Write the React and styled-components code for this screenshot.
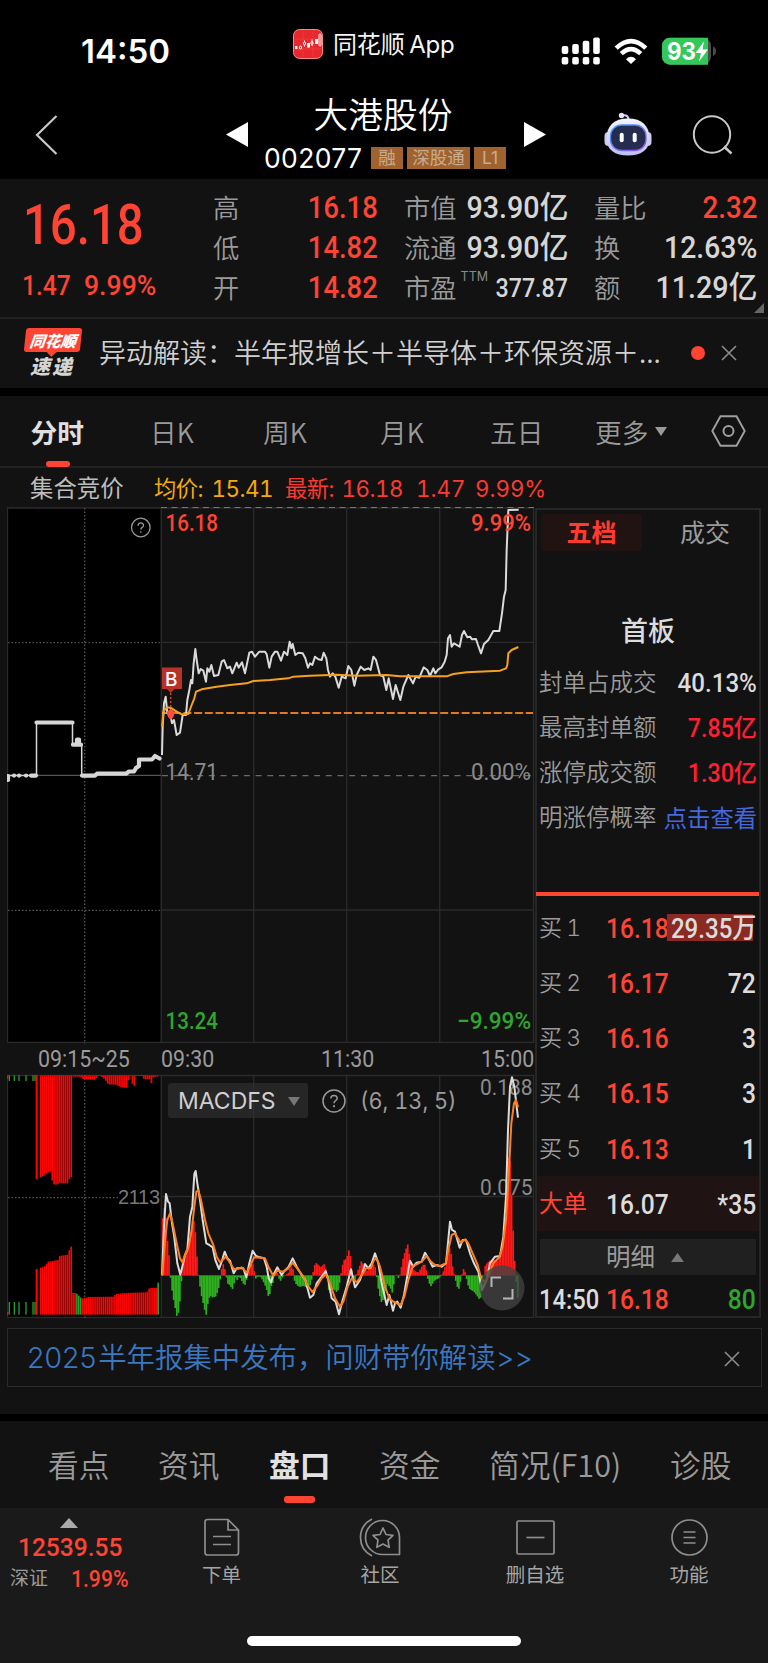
import React from "react";
import styled, { createGlobalStyle } from "styled-components";

const RED = "#ff4433";
const CJK = '"Noto Sans CJK SC", sans-serif';

const GlobalStyle = createGlobalStyle`
  * { box-sizing: border-box; }
  body { margin: 0; background: #121212; }
  svg { display: block; flex: none; }
`;

const Screen = styled.div`
  width: 768px;
  height: 1663px;
  overflow: hidden;
  display: flex;
  flex-direction: column;
  background: #121212;
  color: #d4d4d4;
  font-family: Inter, ${CJK};
  font-weight: 400;
  white-space: nowrap;
`;

/* Text run with its own size, colour, tracking and horizontal condensing. */
const Label = styled.span`
  display: inline-block;
  flex: none;
  font-family: ${(p) => (p.$din ? `Roboto, ${CJK}` : `Inter, ${CJK}`)};
  font-variant-numeric: ${(p) => (p.$proportional ? "normal" : "tabular-nums")};
  font-size: ${(p) => p.$size}px;
  font-weight: ${(p) => p.$weight || 400};
  color: ${(p) => p.$color || "#9b9b9b"};
  letter-spacing: ${(p) => p.$track || 0}px;
  word-spacing: ${(p) => p.$gap || 0}px;
  line-height: 1.2;
  transform: scaleX(${(p) => p.$narrow || 1});
  transform-origin: ${(p) => p.$origin || "left"} center;
`;

/* ---------- status bar and title ---------- */
const StatusBar = styled.header`
  height: 90px;
  flex: none;
  background: #000;
  display: grid;
  grid-template-columns: 293px 268px 207px;
`;
const Clock = styled.div`
  padding: 31px 0 0 81px;
  font-size: 33px;
  line-height: 40px;
  font-weight: 600;
  color: #fff;
`;
const AppName = styled.div`
  display: flex;
  align-items: center;
  gap: 10px;
  height: 88px;
  color: #f5f5f5;
`;
const AppTitle = styled.span`
  font-size: 24px;
  line-height: 32px;
  letter-spacing: -0.15px;
  word-spacing: -2px;
  padding-top: 2px;
`;
const Indicators = styled.div`
  display: flex;
  align-items: flex-start;
  padding-top: 36px;
`;

const TitleBar = styled.div`
  height: 89px;
  flex: none;
  background: #000;
  display: grid;
  grid-template-columns: 226px 22px 276px 22px 58px 48px 116px;
`;
const Spot = styled.div`
  padding: ${(p) => p.$top}px 0 0 ${(p) => p.$left || 0}px;
`;
const StockName = styled.div`
  display: flex;
  flex-direction: column;
  align-items: center;
  color: #fff;
`;
const StockTitle = styled.h1`
  margin: 0 0 0 -6px;
  font-family: ${CJK};
  font-size: 34.7px;
  line-height: 46px;
  font-weight: 350;
`;
const CodeRow = styled.div`
  display: flex;
  align-items: center;
  align-self: flex-start;
  margin: 9px 0 0 16px;
  height: 26px;
`;
const Code = styled.span`
  width: 107px;
  font-size: 26.5px;
  letter-spacing: 0.35px;
`;
const Tag = styled.span`
  width: ${(p) => p.$w}px;
  height: 22px;
  margin-right: 4px;
  background: #a0632f;
  color: #c7ac90;
  font-size: 17.5px;
  line-height: 21px;
  text-align: center;
`;

/* ---------- quote ---------- */
const Quote = styled.section`
  position: relative;
  height: 140px;
  flex: none;
  border-bottom: 2px solid #222;
  display: grid;
  grid-template-columns: 213px 191px 190px 163px;
`;
const PriceBlock = styled.div`
  padding: 12px 0 0 23px;
`;
const LastPrice = styled.div`
  height: 68px;
  display: flex;
  align-items: center;
`;
const ChangeRow = styled.div`
  display: grid;
  grid-template-columns: 62px 90px;
  margin: 10px 0 0 -1px;
`;
const Stats = styled.div`
  display: flex;
  flex-direction: column;
  padding: 9.5px ${(p) => p.$right}px 0 0;
`;
const Stat = styled.div`
  height: 40px;
  display: flex;
  align-items: center;
  justify-content: space-between;
`;
const Superscript = styled.sup`
  font-size: 12.5px;
  line-height: 1;
  margin: 0 auto 22px 4px;
  color: #8a8a8a;
`;
const Corner = styled.svg`
  position: absolute;
  right: 4px;
  bottom: 4px;
`;

/* ---------- news ---------- */
const News = styled.section`
  height: 69px;
  flex: none;
  display: flex;
  align-items: center;
  padding: 0 0 2px 24px;
`;
const Badge = styled.div`
  width: 75px;
  height: 50px;
  display: flex;
  flex-direction: column;
  font-family: ${CJK};
  font-style: italic;
  font-weight: 900;
`;
const BadgeTop = styled.div`
  position: relative;
  width: 56px;
  height: 25px;
  margin-left: 1px;
  line-height: 24px;
  text-align: center;
  font-size: 15.5px;
  color: #fff;
  background: ${RED};
  border-radius: 3px;
  transform: skewX(-6deg);
  &::after {
    content: "";
    position: absolute;
    left: 23px;
    top: 24px;
    border: 5px solid transparent;
    border-top-color: ${RED};
    border-bottom: 0;
  }
`;
const BadgeBottom = styled.div`
  font-size: 20px;
  line-height: 24px;
  padding: 2px 0 0 6px;
  color: #d5d5d5;
  letter-spacing: 2px;
`;
const Headline = styled.div`
  width: 592px;
  margin-top: -2px;
  font-family: ${CJK};
  font-size: 27px;
  font-weight: 350;
  color: #d0d0d0;
`;
const Dot = styled.i`
  width: 14px;
  height: 14px;
  border-radius: 50%;
  background: ${RED};
  margin-right: 16px;
`;
const Divider = styled.div`
  height: ${(p) => p.$h}px;
  flex: none;
  background: #000;
`;

/* ---------- period tabs ---------- */
const Tabs = styled.nav`
  height: 72px;
  flex: none;
  border-bottom: 2px solid #222;
  display: grid;
  grid-template-columns: 150px 113px 117px 110px 105px 116px 57px;
  font-family: ${CJK};
  font-size: 26.7px;
  line-height: 71px;
  color: #9a9a9a;
`;
const Tab = styled.div`
  position: relative;
  padding-left: ${(p) => p.$left || 0}px;
  color: ${(p) => (p.$active ? "#e0e0e0" : "inherit")};
  font-weight: ${(p) => (p.$active ? 700 : 350)};
  &::after {
    content: "";
    display: ${(p) => (p.$active ? "block" : "none")};
    position: absolute;
    left: 45.5px;
    bottom: 0;
    width: 24px;
    height: 6px;
    border-radius: 3px;
    background: ${RED};
  }
`;
const MoreTab = styled(Tab)`
  display: flex;
  align-items: center;
  gap: 7px;
`;
const Legend = styled.div`
  height: 39px;
  flex: none;
  display: grid;
  grid-template-columns: 124px 131px 131px 59px 90px;
  padding: 3px 0 0 30px;
  align-items: center;
`;

/* ---------- chart area ---------- */
const Board = styled.main`
  height: 812px;
  flex: none;
  display: flex;
  padding-left: 7px;
`;
const Charts = styled.div`
  width: 528px;
  display: flex;
  flex-direction: column;
`;
const TimeAxis = styled.div`
  height: 30px;
  flex: none;
  display: grid;
  grid-template-columns: 31px 123px 160px 160px 54px;
  align-items: center;
`;
const Indicator = styled.div`
  position: relative;
  height: 245px;
`;
const IndicatorBar = styled.div`
  position: absolute;
  left: 161px;
  top: 9px;
  display: flex;
  align-items: center;
  height: 35px;
`;
const IndicatorButton = styled.div`
  width: 140px;
  height: 35px;
  border-radius: 3px;
  background: rgba(48, 48, 48, 0.66);
  padding: 2px 0 0 10px;
  display: flex;
  align-items: center;
  gap: 12px;
  margin-right: 14px;
`;
const FullscreenButton = styled.div`
  position: absolute;
  left: 472px;
  top: 191px;
`;

/* ---------- order book ---------- */
const Book = styled.aside`
  width: 226px;
  height: 810px;
  margin-top: 1px;
  border: 2px solid #262626;
`;
const BookTabs = styled.div`
  display: grid;
  grid-template-columns: 101px 1fr;
  padding: 4px 0 0 4px;
  height: 41px;
`;
const BookTab = styled.div`
  font-family: ${CJK};
  font-size: 25px;
  line-height: 35px;
  text-align: center;
  border-radius: 4px;
  padding-left: ${(p) => (p.$active ? 0 : 9)}px;
  color: ${(p) => (p.$active ? "#ff3b30" : "#9b9b9b")};
  background: ${(p) => (p.$active ? "#221313" : "transparent")};
  font-weight: ${(p) => (p.$active ? 600 : 400)};
`;
const BoardTitle = styled.h2`
  margin: 59px 0 11px;
  font-family: ${CJK};
  font-size: 27px;
  line-height: 40px;
  font-weight: 500;
  text-align: center;
  color: #dcdcdc;
`;
const SealRow = styled.div`
  height: 45px;
  display: flex;
  align-items: center;
  justify-content: space-between;
  padding: 0 2px 0 2px;
`;
const RedRule = styled.div`
  height: 4px;
  background: #ff4633;
  margin: 51px 0 4px -1px;
`;
const OrderRow = styled.div`
  height: ${(p) => p.$h || 55.2}px;
  display: grid;
  grid-template-columns: 67px 67px minmax(0, 1fr);
  align-items: center;
  padding: 2px 3px 0 2px;
  background: ${(p) => (p.$big ? "#1f1313" : "transparent")};
`;
const Volume = styled.div`
  display: flex;
  justify-content: flex-end;
  position: relative;
`;
const VolumeFill = styled.div`
  position: absolute;
  right: 3px;
  top: 2px;
  width: 86px;
  height: 27px;
  background: #8a2a23;
`;
const DetailButton = styled.div`
  margin: 8px 3px 0 3px;
  height: 36px;
  background: #202020;
  display: flex;
  align-items: center;
  padding: 1px 0 0 66px;
  gap: 16px;
`;

/* ---------- banner and bottom ---------- */
const Banner = styled.section`
  margin: 9px 6px 27px 7px;
  height: 59px;
  flex: none;
  border: 1.5px solid #2b2b2b;
  display: flex;
  align-items: center;
  justify-content: space-between;
  padding: 2px 21px 0 19px;
`;
const SectionTabs = styled.nav`
  height: 87px;
  flex: none;
  display: grid;
  grid-template-columns: 158px 111px 110px 110px 181px 98px;
  font-family: ${CJK};
  font-size: 30.7px;
  line-height: 86px;
`;
const SectionTab = styled.div`
  position: relative;
  padding-left: ${(p) => p.$left || 0}px;
  color: ${(p) => (p.$active ? "#e2e2e2" : "#9a9a9a")};
  font-weight: ${(p) => (p.$active ? 700 : 350)};
  &::after {
    content: "";
    display: ${(p) => (p.$active ? "block" : "none")};
    position: absolute;
    left: 15px;
    bottom: 5.5px;
    width: 31px;
    height: 6.5px;
    border-radius: 3px;
    background: ${RED};
  }
`;
const ActionBar = styled.footer`
  flex: 1;
  background: #1a1a1a;
  display: grid;
  grid-template-columns: 147px 149px 168px 142px 166px;
  grid-template-rows: 128px 1fr;
`;
const IndexCell = styled.div`
  padding: 10px 0 0 10px;
`;
const IndexValue = styled.div`
  padding-left: 8px;
  height: 35px;
  display: flex;
  align-items: flex-end;
`;
const IndexRow = styled.div`
  display: grid;
  grid-template-columns: 61px 60px;
  align-items: center;
  margin-top: 2px;
`;
const Action = styled.div`
  display: flex;
  flex-direction: column;
  align-items: center;
  padding-top: 10px;
  gap: 7px;
`;
const HomeIndicator = styled.div`
  width: 274px;
  height: 10px;
  margin-left: 247px;
  grid-column: 1 / -1;
  border-radius: 5px;
  background: #fff;
`;

/* ---------- icons ---------- */
const AppIcon = () => (
  <svg width="30" height="30" viewBox="0 0 30 30">
    <rect x="0.5" y="0.5" width="29" height="29" rx="6" fill="#e8282c" stroke="#f58a86" />
    <path d="M2 10H28M2 20H28M10 2V28M20 2V28" stroke="#ef4a4b" strokeWidth=".5" />
    <rect x="2" y="17" width="2.4" height="3" fill="#fff" />
    <g fill="none" stroke="#fff">
      <rect x="6.5" y="17" width="2" height="3" rx="1" />
      <path d="M11.5 11.5V13M11.5 16V17.5" />
      <rect x="10.5" y="13" width="2" height="3" rx="1" />
      <path d="M19 10.500V17" />
      <rect x="18" y="12.500" width="2" height="3" rx="1" />
      <rect x="26" y="5" width="2" height="12" rx="1" />
    </g>
    <rect x="14" y="14" width="3" height="4.500" fill="#fff" />
    <rect x="22" y="10" width="3" height="5" fill="#fff" />
  </svg>
);
const SystemIcons = () => (
  <svg width="170" height="32" viewBox="561 36 170 32">
    <g fill="#fff">
      {[46, 44, 40.7, 37.5].map((y, i) => (
        <g key={y}>
          <rect x={561.7 + i * 10.5} y={y} width="6.6" height={54 - y} rx="2" />
          <rect x={561.7 + i * 10.5} y="57" width="6.600" height="7.600" rx="2" />
        </g>
      ))}
      <path d="M626 59.200Q631 54.500 636 59.200L631 64Z" />
    </g>
    <g fill="none" stroke="#fff" strokeWidth="4.600">
      <path d="M616.200 48.200Q631 34 645.800 48.200" />
      <path d="M621.300 53.600Q631 44.500 640.700 53.600" />
    </g>
    <rect x="662" y="37.700" width="49" height="27" rx="8" fill="#4a4a4d" />
    <path d="M670 37.700H708V64.700H670A8 8 0 0 1 662 56.700V45.700A8 8 0 0 1 670 37.700Z" fill="#34c759" />
    <path d="M713 46.500Q716 47.500 716 51.200T713 56Z" fill="#4a4a4d" />
    <text x="667" y="59.500" fill="#fff" fontFamily="Inter" fontWeight="700" fontSize="24" textLength="29" lengthAdjust="spacingAndGlyphs">93</text>
    <path d="M704 41.500L695.500 53H701L699 61.500L708 49.500H702.500Z" fill="#fff" />
  </svg>
);
const Chevron = () => (
  <svg width="24" height="42" viewBox="0 0 24 42">
    <path d="M21.500 1L2 20L21.500 39" fill="none" stroke="#c8c8c8" strokeWidth="2.200" />
  </svg>
);
const Triangle = ({ points, w, h, color }) => (
  <svg width={w} height={h}>
    <polygon points={points} fill={color} />
  </svg>
);
const Robot = () => (
  <svg width="48" height="45" viewBox="604 112 48 45">
    <defs>
      <linearGradient id="shell" x1="0" y1="0" x2="0" y2="1">
        <stop offset="0" stopColor="#f4f3fd" />
        <stop offset="1" stopColor="#bcc0ec" />
      </linearGradient>
      <linearGradient id="rim" x1="0" y1="0" x2="1" y2="1">
        <stop offset="0" stopColor="#3aa5ff" />
        <stop offset="1" stopColor="#9a4bf0" />
      </linearGradient>
    </defs>
    <path d="M622 115.500Q629 114 628.500 121" fill="none" stroke="#cfd1f1" strokeWidth="2" />
    <circle cx="621.500" cy="115.500" r="2.700" fill="#e3e3f8" />
    <rect x="604.500" y="132" width="8" height="14" rx="4" fill="#c9cbf0" />
    <rect x="643.500" y="132" width="8" height="14" rx="4" fill="#c9cbf0" />
    <path d="M628 118.500C642 118.500 649.500 126 649.500 138.500C649.500 150 641 155.500 628 155.500S606.500 150 606.500 138.500C606.500 126 614 118.500 628 118.500Z" fill="url(#shell)" />
    <rect x="610.500" y="125" width="35.500" height="25.500" rx="11" fill="#252c50" stroke="url(#rim)" strokeWidth="1.300" />
    <rect x="619.700" y="132.700" width="4" height="9.500" rx="2" fill="#fff" />
    <rect x="632.700" y="132.700" width="4" height="9.500" rx="2" fill="#fff" />
  </svg>
);
const SearchIcon = () => (
  <svg width="42" height="42" viewBox="692 115 42 42">
    <circle cx="712" cy="134.500" r="18.200" fill="none" stroke="#c8c8c8" strokeWidth="2" />
    <path d="M724 146.500L731.500 153.500" stroke="#c8c8c8" strokeWidth="2.400" />
  </svg>
);
const CloseIcon = ({ size = 16 }) => (
  <svg width={size} height={size} viewBox="0 0 16 16">
    <path d="M1 1L15 15M15 1L1 15" stroke="#8c8c8c" strokeWidth="1.600" />
  </svg>
);
const HexIcon = () => (
  <svg width="35" height="32" viewBox="0 0 35 32">
    <path d="M9.500 1.300H25.500L33.700 16L25.500 30.700H9.500L1.300 16Z" fill="none" stroke="#a0a0a0" strokeWidth="1.900" />
    <circle cx="17.500" cy="16" r="5" fill="none" stroke="#a0a0a0" strokeWidth="2" />
  </svg>
);
const HelpIcon = ({ size = 24 }) => (
  <svg width={size} height={size} viewBox="0 0 24 24">
    <circle cx="12" cy="12" r="11" fill="none" stroke="#9a9a9a" strokeWidth="1.500" />
    <path d="M8.800 9.500C8.800 5.400 15.200 5.400 15.200 9.300C15.200 11.600 12 11.500 12 14.300" fill="none" stroke="#9a9a9a" strokeWidth="1.500" />
    <circle cx="12" cy="17.200" r="1.100" fill="#9a9a9a" />
  </svg>
);
const stroke = { fill: "none", stroke: "#8e8e8e", strokeWidth: 1.7, strokeLinejoin: "round" };
const OrderIcon = () => (
  <svg width="36" height="39" viewBox="0 0 36 39" {...stroke}>
    <path d="M1 4Q1 1.500 3.500 1.500H24L34.500 12V34.500Q34.500 37 32 37H3.500Q1 37 1 34.500ZM24 1.500V12H34.500M9 18.500H27M9 26.500H27" />
  </svg>
);
const CommunityIcon = () => (
  <svg width="42" height="39" viewBox="0 0 42 39" {...stroke}>
    <path d="M13 1Q1.500 7 1.500 19.500T13 38" />
    <path d="M40.500 36.500H24A17 17 0 1 1 40.500 20Z" />
    <path d="M24 10L27 16.500L34 17.300L29 22.200L30.200 29.300L24 26L17.800 29.300L19 22.200L14 17.300L21 16.500Z" />
  </svg>
);
const RemoveIcon = () => (
  <svg width="39" height="39" viewBox="0 0 39 39" {...stroke}>
    <rect x="1" y="3" width="37" height="33" rx="1.500" />
    <path d="M10.500 19.500H28.500" />
  </svg>
);
const MenuIcon = () => (
  <svg width="37" height="39" viewBox="0 0 37 39" {...stroke}>
    <circle cx="18.500" cy="19.500" r="17.500" />
    <path d="M12.500 14H24.500M12.500 19.500H24.500M12.500 25H24.500" />
  </svg>
);

/* ---------- chart data ---------- */
const PRICE =
  "36,765 38,680 42,610 47,590 52,640 60,640 66,670 72,660 80,705 90,698 98,645 108,645 112,600 118,570 123,540 127,550 131,490 136,447 140,480 146,520 152,507 160,512 168,545 172,505 178,515 184,495 192,528 205,525 215,485 222,480 232,505 240,500 247,520 260,488 266,503 276,487 285,520 298,458 306,455 315,470 328,455 345,455 350,463 358,503 365,470 375,455 382,455 393,482 402,455 412,465 419,425 424,445 428,432 436,465 445,458 458,460 466,475 474,503 480,490 487,495 495,470 505,478 515,480 521,458 529,475 534,510 540,530 548,520 556,530 566,563 575,530 587,535 595,498 604,510 613,557 620,525 632,500 643,510 655,505 662,510 670,470 678,480 690,525 700,530 709,570 716,535 729,597 737,555 751,600 760,560 775,525 789,550 797,530 808,533 821,502 832,510 840,528 850,505 856,520 865,508 875,502 884,485 890,465 894,415 900,405 905,440 912,430 929,440 936,405 942,393 952,412 960,410 966,418 978,417 984,435 993,460 1002,432 1015,420 1030,393 1048,393 1056,340 1062,290 1067,270 1070,150 1075,30 1106,29";
const AVERAGE =
  "36,680 41,632 52,622 65,625 80,635 95,643 115,642 125,615 133,595 138,575 155,568 200,560 240,555 290,550 310,543 360,540 415,535 430,530 480,527 560,524 620,527 710,525 750,529 890,529 910,522 950,517 1050,512 1068,505 1072,495 1075,460 1085,450 1105,441";
const DIF =
  "36,676 42,530 48,432 54,455 59,460 66,520 72,555 82,640 91,674 97,650 105,615 112,600 120,500 127,470 133,372 137,363 142,400 150,450 158,510 169,580 178,585 188,592 196,630 207,657 215,635 224,605 232,625 240,632 251,670 260,655 272,655 280,655 289,682 298,640 308,602 318,618 330,622 342,625 350,650 356,685 363,697 370,675 382,652 395,675 404,662 415,652 428,625 440,650 455,675 466,690 480,743 490,735 500,700 515,680 527,663 535,690 545,745 557,755 567,793 578,750 590,710 603,658 615,712 630,690 640,660 645,642 655,655 665,640 675,610 685,640 695,700 710,765 718,735 729,782 735,760 742,755 752,773 762,735 775,660 780,632 790,650 800,638 815,635 825,608 835,625 848,650 860,645 875,650 888,640 893,590 900,515 906,540 915,545 929,593 938,570 948,570 960,610 972,640 985,665 996,720 1010,690 1020,640 1035,620 1050,618 1060,560 1068,440 1074,240 1080,110 1086,82 1093,110 1100,170 1104,203";
const DEA =
  "37,676 45,570 52,510 60,490 68,520 80,580 90,625 97,637 107,610 115,595 125,540 133,470 139,425 145,420 153,450 165,510 175,550 190,585 200,620 210,637 218,630 227,620 238,635 250,655 258,658 275,652 290,668 300,650 312,622 330,623 345,625 355,650 370,678 382,662 400,665 415,655 428,638 445,660 460,680 472,705 487,726 500,710 515,685 528,673 540,700 555,745 570,770 580,755 593,710 605,685 620,697 632,680 648,655 662,655 672,630 680,625 690,650 705,710 718,745 730,755 752,765 763,740 775,690 788,650 800,643 815,635 830,618 840,632 855,645 870,648 887,640 897,590 905,555 915,550 932,578 946,568 955,580 968,610 983,645 992,680 1003,697 1015,680 1030,640 1048,622 1058,590 1068,510 1076,380 1084,220 1092,160 1098,150 1104,172";
const MACD =
  "36,540 40,480 46,468 50,555 56,600 60,668 63,695 68,735 74,765 80,797 86,785 91,740 95,680 97,660 105,610 115,580 125,545 133,505 138,575 143,660 147,690 154,735 162,770 168,797 174,755 180,735 188,742 198,738 206,712 212,678 216,650 221,640 227,672 233,700 240,705 247,718 252,700 256,680 262,690 268,676 273,688 280,700 287,705 291,678 297,640 305,630 312,660 317,685 322,680 330,678 338,690 345,705 352,725 357,748 362,710 368,700 374,675 381,665 390,695 397,680 405,676 415,668 422,650 428,650 433,690 440,705 450,710 460,706 472,714 480,705 487,680 492,650 497,638 505,645 514,652 521,640 528,660 532,690 538,735 545,715 555,720 562,728 568,700 573,670 580,632 590,625 596,600 602,622 606,665 611,685 616,690 620,670 628,650 635,630 642,652 650,665 660,655 668,640 675,650 680,680 686,725 694,755 702,745 712,700 720,710 727,728 734,685 738,665 742,680 747,685 752,665 758,630 765,605 773,583 779,620 785,655 793,662 805,668 815,650 823,640 830,665 835,695 843,708 853,690 865,685 875,674 882,660 890,632 896,600 901,590 906,640 912,670 918,695 925,722 932,690 936,672 941,655 947,670 952,700 960,718 970,722 980,735 990,750 996,720 1000,680 1006,645 1018,632 1030,628 1042,635 1052,615 1060,570 1068,480 1073,380 1077,280 1082,370 1087,495 1092,600 1096,670 1099,700 1103,742 1107,742"
    .split(" ")
    .map((pair) => pair.split(",").map(Number));

const valueAt = (points, x) => {
  const next = Math.max(1, points.findIndex((p) => p[0] >= x));
  const [x0, y0] = points[next - 1];
  const [x1, y1] = points[next];
  return y0 + ((y1 - y0) * (x - x0)) / (x1 - x0);
};
const ZERO = 676;
const STEP = 4.65;
const macdBars = Array.from({ length: 230 }, (_, i) => {
  const x = 36 + i * STEP;
  return { x, y: valueAt(MACD, Math.min(x + STEP / 2, 1106)) };
});

const range = (from, to, step) => {
  const out = [];
  for (let x = from; x <= to; x += step) out.push(x);
  return out;
};
const TICKS = [26, 41, 55, 76, 97, 103];
const UPPER = [[120, 412], [132, 404], [142, 397], [152, 397], [155, 430], [165, 435], [175, 430], [200, 430], [208, 412], [216, 412]];
const UPPER_SMALL = [[218, 110], [240, 110], [246, 117], [285, 120], [288, 107], [300, 108], [312, 118], [322, 133], [345, 134], [362, 143], [382, 143], [384, 108], [392, 108], [396, 143], [400, 143], [403, 108], [424, 108], [430, 118], [446, 118], [452, 130], [456, 112], [476, 108]];
const LOWER = [[120, 683], [130, 680], [142, 665], [172, 660], [176, 648], [200, 644], [210, 620], [214, 620], [216, 759], [226, 759], [243, 776], [262, 771], [338, 770], [345, 762], [370, 759], [438, 757], [446, 744], [472, 743]];

const GRID = "#2b2b2b";
const SCALE_LABEL = { textLength: 52.5, lengthAdjust: "spacingAndGlyphs" };

const PriceChart = () => (
  <svg width="528" height="537" viewBox="7 507 528 537" fontFamily="Roboto" fontSize="23.500" fontWeight="500">
    <rect x="7.500" y="508" width="153" height="534" fill="#000" />
    <g stroke={GRID} fill="none" strokeWidth="1.300">
      <path d="M7.500 508H533.500V1042.400H7.500ZM161.300 508V1042M253.700 508V1042M346.700 508V1042M439.700 508V1042M161 642.300H533M161 910H533" />
      <path d="M7.500 775.400H161" stroke="#555" />
    </g>
    <g stroke="#555" strokeWidth="1.300" strokeDasharray="1.500 2">
      <path d="M84.700 508V1044M8 642.700H160M8 910.300H160" />
    </g>
    <path d="M161 507.500H534" stroke="#8a7350" strokeDasharray="6 4.500" />
    <path d="M162 775.600H533" stroke="#6a6a6a" strokeWidth="1.300" strokeDasharray="6 5.700" />
    <path d="M162 713H533" stroke="#e27a1c" strokeWidth="2.200" strokeDasharray="8 2.700" />
    <g fill="none" stroke="#d6d6d6" strokeWidth="1.500">
      <path d="M8 775.500H36.500V722.500H72.500V744.700H81.700V775.500H95" />
      <g strokeWidth="4.200" strokeLinecap="round" strokeLinejoin="round">
        <path d="M8 776V780M14 775.600h.1M19 775.600h.1M26 775.600h.1M31 775.600H36M36.500 722.500H72.500M73 744.700H77V739.500H79V744.700H81M82 775.600H95L97 773.700H126L129 771.500H134L136 768L139 766V759.500H152L155 756L159.500 758.500" />
      </g>
    </g>
    <g transform="translate(150 500) scale(.33333)" fill="none" strokeLinejoin="round">
      <polyline points={PRICE} stroke="#dadada" strokeWidth="6" />
      <polyline points={AVERAGE} stroke="#f5a11d" strokeWidth="6" />
    </g>
    <path d="M170.700 689V713" stroke="#e23b2e" strokeWidth="1.500" strokeDasharray="2 2" />
    <path d="M162 667.500H182V689H174.500L170.700 693L167 689H162Z" fill="#b8322a" />
    <path d="M166.500 712L170.700 709L174.700 712L173.500 717L170.700 720L168 717Z" fill="#fb4f3f" />
    <text x="165" y="686" fill="#fff" fontFamily="Inter" fontWeight="500" fontSize="19">B</text>
    <text x="165.500" y="530.700" fill={RED} {...SCALE_LABEL}>16.18</text>
    <text x="531" y="530.700" fill={RED} textAnchor="end" textLength="60" lengthAdjust="spacingAndGlyphs">9.99%</text>
    <g fill="#8b8b8b" fontWeight="400">
      <text x="165.500" y="779.500" {...SCALE_LABEL}>14.71</text>
      <text x="531" y="779.500" textAnchor="end" textLength="60" lengthAdjust="spacingAndGlyphs">0.00%</text>
    </g>
    <g fill="#2fa62d">
      <text x="165.500" y="1028.500" {...SCALE_LABEL}>13.24</text>
      <text x="531" y="1028.500" textAnchor="end" textLength="74" lengthAdjust="spacingAndGlyphs">−9.99%</text>
    </g>
    <g transform="translate(129.300 516)" fill="none" stroke="#9a9a9a" strokeWidth="1.300">
      <circle cx="11.500" cy="11.500" r="9.300" />
      <path d="M8.800 9.700C8.800 6 14.200 6 14.200 9.500C14.200 11.500 11.500 11.300 11.500 13.500M11.500 15.200V16.700" />
    </g>
  </svg>
);

const MacdChart = () => (
  <svg width="528" height="245" viewBox="7 1074 528 245" fontFamily="Roboto" fontSize="22.500">
    <rect x="7.500" y="1075" width="153" height="242" fill="#000" />
    <g stroke={GRID} fill="none" strokeWidth="1.300">
      <path d="M7.500 1075.500H533.500V1317.400H7.500ZM161.300 1075V1317M253.700 1075V1317M346.700 1075V1317M439.700 1075V1317M161 1196.500H533" />
    </g>
    <path d="M84.700 1075V1318M8 1197.700H120" stroke="#555" strokeWidth="1.300" strokeDasharray="1.500 2" />
    <g transform="translate(0 1040) scale(.33333)">
      {TICKS.map((x) => (
        <g key={x} fill="#2b9a30">
          <rect x={x} y="106" width="4" height="17" />
          <rect x={x} y="786" width="4" height="38" />
        </g>
      ))}
      <path d="M21 106h4v10h-4ZM21 816h4v8h-4ZM107 106h6v311h-6ZM107 687h6v137h-6Z" fill="#fb0606" />
      {range(120, 214, 5.7).map((x) => (
        <rect key={x} x={x} y="106" width="4.900" height={valueAt(UPPER, Math.min(x, 215)) - 106} fill="#fb0606" />
      ))}
      {range(218, 474, 5.7).map((x) => (
        <rect key={x} x={x} y="106" width="5.300" height={valueAt(UPPER_SMALL, x) - 106} fill="#ef0606" />
      ))}
      {range(120, 470, 5.7).map((x) => (
        <rect
          key={x}
          x={x}
          y={valueAt(LOWER, x)}
          width="4.900"
          height={824 - valueAt(LOWER, x)}
          fill={x > 228 && x < 242 ? "#2b9a30" : "#fb0606"}
        />
      ))}
      <rect x="472" y="728" width="5" height="96" fill="#2b9a30" />
    </g>
    <text x="118" y="1204" fontFamily="Liberation Sans" fontSize="20" fill="#777" textLength="42">2113</text>
    <g fill="#8b8b8b">
      <text x="532.500" y="1095" textAnchor="end" {...SCALE_LABEL}>0.188</text>
      <text x="532.500" y="1194.700" textAnchor="end" {...SCALE_LABEL}>0.075</text>
    </g>
    <g transform="translate(150 1050) scale(.33333)" fill="none" strokeLinejoin="round">
      {macdBars.map(({ x, y }) => (
        <rect
          key={x}
          x={x}
          y={Math.min(y, ZERO)}
          width={STEP + 0.4}
          height={Math.abs(y - ZERO) + 1}
          fill={y < ZERO ? "#ff1818" : "#2eb11e"}
        />
      ))}
      <polyline points={DIF} stroke="#dcdcdc" strokeWidth="6" />
      <polyline points={DEA} stroke="#ff7f1c" strokeWidth="6" />
    </g>
  </svg>
);

const FullscreenIcon = () => (
  <svg width="46" height="46" viewBox="0 0 46 46">
    <circle cx="23" cy="23" r="22.500" fill="rgba(66,66,66,.78)" />
    <path d="M12.500 22V12.500H22M33.500 24V33.500H24" fill="none" stroke="#b5b5b5" strokeWidth="2" />
  </svg>
);

/* ---------- content ---------- */
const HIGH_LOW = [["高", "16.18"], ["低", "14.82"], ["开", "14.82"]];
const SEAL = [
  ["封单占成交", "40.13%", "#dcdcdc", 0.945],
  ["最高封单额", "7.85亿", "#ff1f33", 0.91],
  ["涨停成交额", "1.30亿", "#ff1f33", 0.91],
  ["明涨停概率", "点击查看", "#4468e0"],
];
const ORDERS = [
  ["买 1", "16.18", "29.35万"],
  ["买 2", "16.17", "72"],
  ["买 3", "16.16", "3"],
  ["买 4", "16.15", "3"],
  ["买 5", "16.13", "1"],
];

const StatLabel = ({ children }) => <Label $size={26.3} $weight={350}>{children}</Label>;
const StatValue = ({ children, color = "#d6d6d6", size = 30.5, narrow = 0.94 }) => (
  <Label $din $size={size} $weight={500} $color={color} $narrow={narrow} $origin="right">{children}</Label>
);
const BookNumber = ({ children, color = "#dcdcdc", origin = "left", size = 28, narrow = 0.88 }) => (
  <Label $din $size={size} $weight={500} $color={color} $narrow={narrow} $origin={origin}>{children}</Label>
);

export default function App() {
  return (
    <Screen>
      <GlobalStyle />
      <StatusBar>
        <Clock>14:50</Clock>
        <AppName><AppIcon /><AppTitle>同花顺 App</AppTitle></AppName>
        <Indicators><SystemIcons /></Indicators>
      </StatusBar>
      <TitleBar>
        <Spot $top={25} $left={35}><Chevron /></Spot>
        <Spot $top={32}><Triangle w={22} h={25} points="22,0 22,25 0,12.500" color="#fff" /></Spot>
        <StockName>
          <StockTitle>大港股份</StockTitle>
          <CodeRow>
            <Code>002077</Code>
            <Tag $w={32}>融</Tag>
            <Tag $w={63}>深股通</Tag>
            <Tag $w={32}>L1</Tag>
          </CodeRow>
        </StockName>
        <Spot $top={32}><Triangle w={22} h={25} points="0,0 0,25 22,12.500" color="#fff" /></Spot>
        <span />
        <Spot $top={22}><Robot /></Spot>
        <Spot $top={25} $left={40}><SearchIcon /></Spot>
      </TitleBar>

      <Quote>
        <PriceBlock>
          <LastPrice><Label $din $size={55} $weight={500} $color={RED} $narrow={0.86}>16.18</Label></LastPrice>
          <ChangeRow>
            <Label $din $size={28} $weight={500} $color={RED} $narrow={0.88}>1.47</Label>
            <Label $din $size={28} $weight={500} $color={RED} $narrow={0.95}>9.99%</Label>
          </ChangeRow>
        </PriceBlock>
        <Stats $right={26}>
          {HIGH_LOW.map(([name, value]) => (
            <Stat key={name}><StatLabel>{name}</StatLabel><StatValue color={RED} narrow={0.9}>{value}</StatValue></Stat>
          ))}
        </Stats>
        <Stats $right={26}>
          <Stat><StatLabel>市值</StatLabel><StatValue>93.90亿</StatValue></Stat>
          <Stat><StatLabel>流通</StatLabel><StatValue>93.90亿</StatValue></Stat>
          <Stat><StatLabel>市盈</StatLabel><Superscript>TTM</Superscript><StatValue size={25} narrow={0.93}>377.87</StatValue></Stat>
        </Stats>
        <Stats $right={0}>
          <Stat><StatLabel>量比</StatLabel><StatValue color={RED} narrow={0.91}>2.32</StatValue></Stat>
          <Stat><StatLabel>换</StatLabel><StatValue narrow={0.93}>12.63%</StatValue></Stat>
          <Stat><StatLabel>额</StatLabel><StatValue>11.29亿</StatValue></Stat>
        </Stats>
        <Corner width="10" height="10"><polygon points="10,0 10,10 0,10" fill="#666" /></Corner>
      </Quote>

      <News>
        <Badge><BadgeTop>同花顺</BadgeTop><BadgeBottom>速递</BadgeBottom></Badge>
        <Headline>异动解读：半年报增长＋半导体＋环保资源＋...</Headline>
        <Dot />
        <CloseIcon />
      </News>
      <Divider $h={8} />

      <Tabs>
        <Tab $active $left={30.5}>分时</Tab>
        <Tab>日K</Tab>
        <Tab>周K</Tab>
        <Tab>月K</Tab>
        <Tab>五日</Tab>
        <MoreTab>更多<Triangle w={12} h={9} points="0,0 12,0 6,9" color="#9a9a9a" /></MoreTab>
        <Spot $top={19}><HexIcon /></Spot>
      </Tabs>
      <Legend>
        <Label $size={23.4} $color="#bdbdbd">集合竞价</Label>
        <Label $size={22.3} $color="#f5a90a" $track={-0.5} $gap={3}>均价: 15.41</Label>
        <Label $size={22.3} $color="#fb3b2f" $track={-0.5} $gap={2}>最新: 16.18</Label>
        <Label $size={22.3} $color="#fb3b2f">1.47</Label>
        <Label $size={22.3} $color="#fb3b2f">9.99%</Label>
      </Legend>

      <Board>
        <Charts>
          <PriceChart />
          <TimeAxis>
            <span />
            <Label $din $size={23.5} $narrow={0.91}>09:15~25</Label>
            <Label $din $size={23.5} $narrow={0.91}>09:30</Label>
            <Label $din $size={23.5} $narrow={0.91}>11:30</Label>
            <Label $din $size={23.5} $narrow={0.91}>15:00</Label>
          </TimeAxis>
          <Indicator>
            <MacdChart />
            <IndicatorBar>
              <IndicatorButton>
                <Label $size={23} $color="#cfcfcf">MACDFS</Label>
                <Triangle w={12} h={9} points="0,0 12,0 6,9" color="#777" />
              </IndicatorButton>
              <HelpIcon />
              <Spot $top={0} $left={14}><Label $size={22.500} $narrow={0.965}>(6, 13, 5)</Label></Spot>
            </IndicatorBar>
            <FullscreenButton><FullscreenIcon /></FullscreenButton>
          </Indicator>
        </Charts>

        <Book>
          <BookTabs><BookTab $active>五档</BookTab><BookTab>成交</BookTab></BookTabs>
          <BoardTitle>首板</BoardTitle>
          {SEAL.map(([name, value, color, narrow]) => (
            <SealRow key={name}>
              <Label $size={23.5} $weight={350}>{name}</Label>
              {narrow ? (
                <BookNumber size={25.5} color={color} origin="right" narrow={narrow}>{value}</BookNumber>
              ) : (
                <Label $size={23.3} $color={color}>{value}</Label>
              )}
            </SealRow>
          ))}
          <RedRule />
          {ORDERS.map(([name, price, volume], i) => (
            <OrderRow key={name}>
              <Label $size={23} $weight={350} $gap={-2}>{name}</Label>
              <BookNumber color={RED}>{price}</BookNumber>
              <Volume>
                {i === 0 && <VolumeFill />}
                <BookNumber origin="right" narrow={i === 0 ? 0.86 : 0.88}>{volume}</BookNumber>
              </Volume>
            </OrderRow>
          ))}
          <OrderRow $big>
            <Label $size={24} $color={RED}>大单</Label>
            <BookNumber>16.07</BookNumber>
            <Volume><BookNumber origin="right">*35</BookNumber></Volume>
          </OrderRow>
          <DetailButton>
            <Label $size={24.5}>明细</Label>
            <Triangle w={13} h={9} points="0,9 13,9 6.500,0" color="#777" />
          </DetailButton>
          <OrderRow $h={48}>
            <BookNumber size={27}>14:50</BookNumber>
            <BookNumber color={RED}>16.18</BookNumber>
            <Volume><BookNumber color="#2fa62d" origin="right">80</BookNumber></Volume>
          </OrderRow>
        </Book>
      </Board>

      <Banner>
        <Label $proportional $size={28.5} $color="#3a78c2" $weight={350} $gap={-6} $narrow={0.996}>2025 半年报集中发布，问财带你解读&gt;&gt;</Label>
        <CloseIcon />
      </Banner>
      <Divider $h={7} />

      <SectionTabs>
        <SectionTab $left={48}>看点</SectionTab>
        <SectionTab>资讯</SectionTab>
        <SectionTab $active>盘口</SectionTab>
        <SectionTab>资金</SectionTab>
        <SectionTab>简况(F10)</SectionTab>
        <SectionTab>诊股</SectionTab>
      </SectionTabs>
      <ActionBar>
        <IndexCell>
          <Spot $top={0} $left={50}><Triangle w={18} h={10} points="0,10 18,10 9,0" color="#aaa" /></Spot>
          <IndexValue><Label $din $size={26.5} $weight={500} $color={RED} $narrow={0.925}>12539.55</Label></IndexValue>
          <IndexRow>
            <Label $size={19}>深证</Label>
            <Label $din $size={24} $weight={500} $color={RED} $narrow={0.88}>1.99%</Label>
          </IndexRow>
        </IndexCell>
        <Action><OrderIcon /><Label $size={19.5} $color="#a5a5a5">下单</Label></Action>
        <Action><CommunityIcon /><Label $size={19.5} $color="#a5a5a5">社区</Label></Action>
        <Action><RemoveIcon /><Label $size={19.5} $color="#a5a5a5">删自选</Label></Action>
        <Action><MenuIcon /><Label $size={19.5} $color="#a5a5a5">功能</Label></Action>
        <HomeIndicator />
      </ActionBar>
    </Screen>
  );
}
